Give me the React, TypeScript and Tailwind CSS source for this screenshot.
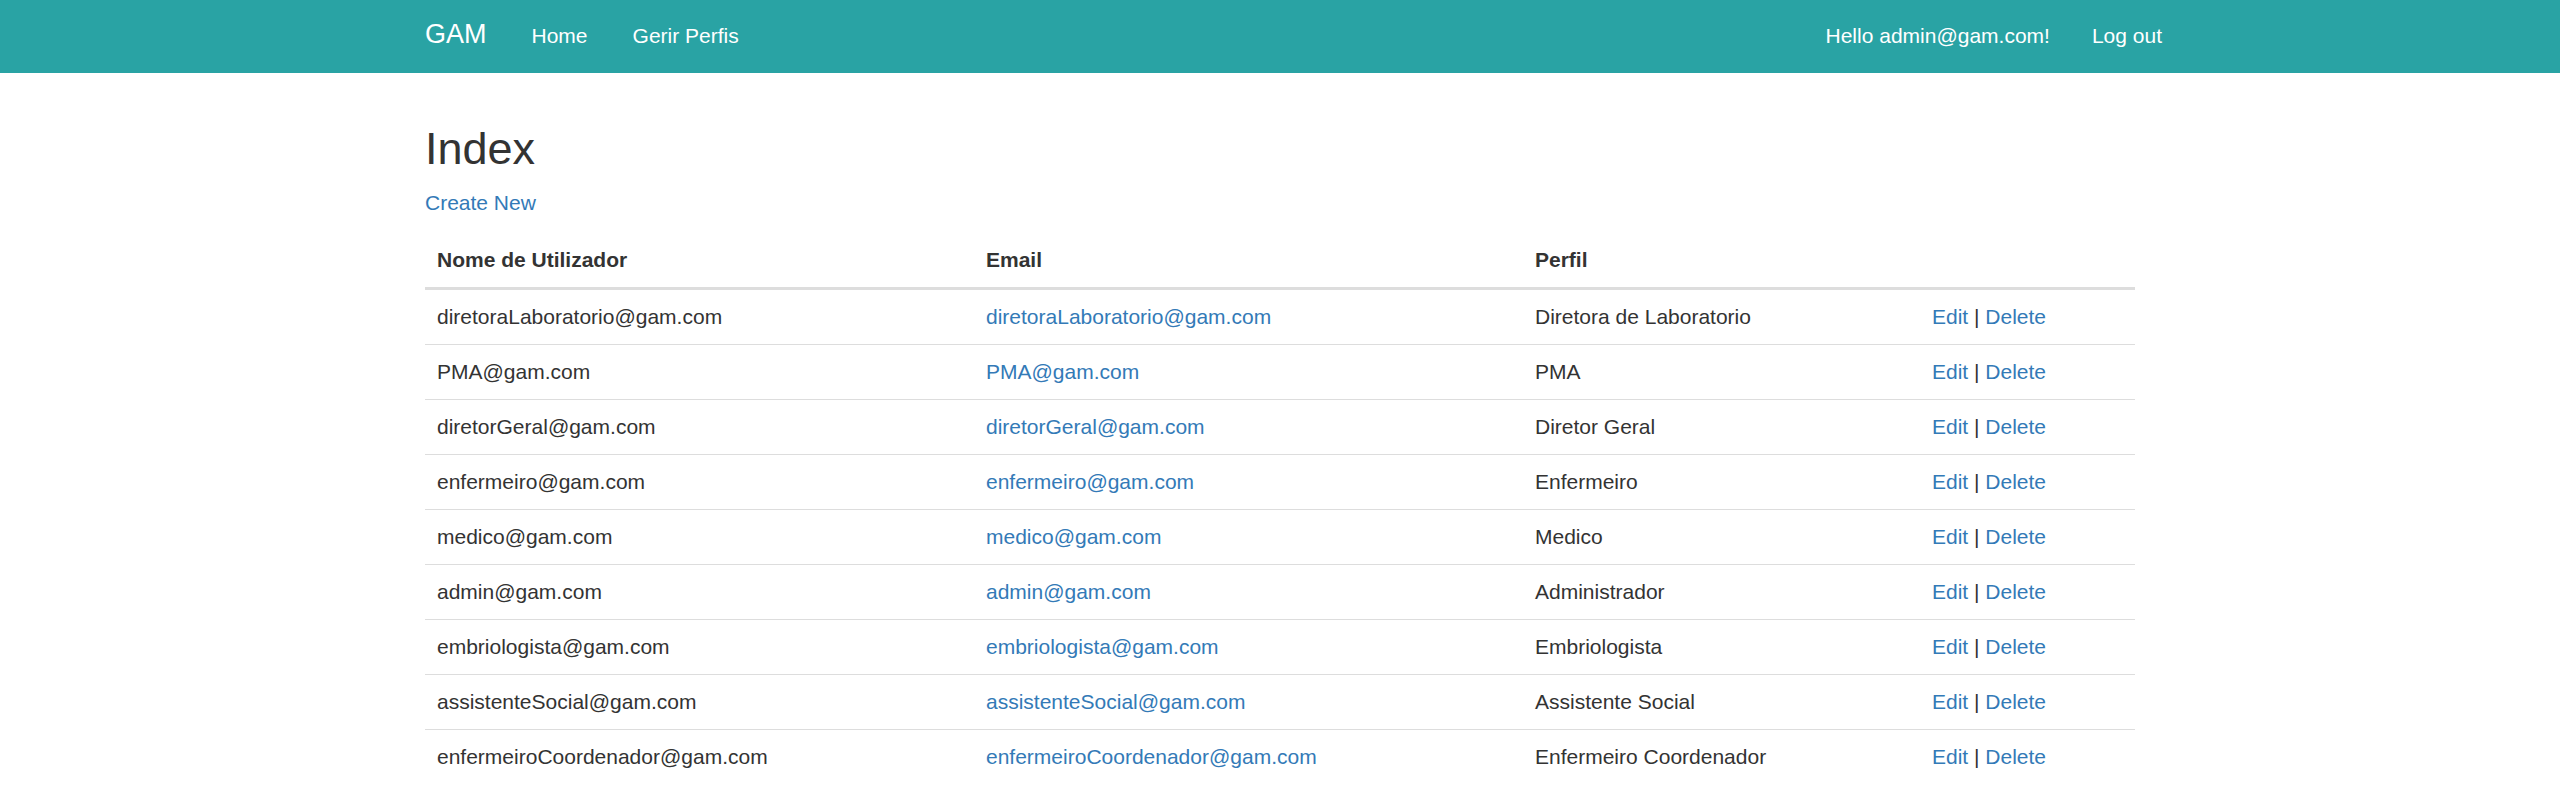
const USERS = [
  { user: 'diretoraLaboratorio@gam.com', perfil: 'Diretora de Laboratorio' },
  { user: 'PMA@gam.com', perfil: 'PMA' },
  { user: 'diretorGeral@gam.com', perfil: 'Diretor Geral' },
  { user: 'enfermeiro@gam.com', perfil: 'Enfermeiro' },
  { user: 'medico@gam.com', perfil: 'Medico' },
  { user: 'admin@gam.com', perfil: 'Administrador' },
  { user: 'embriologista@gam.com', perfil: 'Embriologista' },
  { user: 'assistenteSocial@gam.com', perfil: 'Assistente Social' },
  { user: 'enfermeiroCoordenador@gam.com', perfil: 'Enfermeiro Coordenador' },
];

function Navbar() {
  return (
    <nav className="h-[73px] bg-[#29a3a4] text-white">
      <div className="mx-auto flex h-full w-[1710px] items-center justify-between">
        <div className="flex h-full items-center">
          <a href="#" className="pb-[6px] text-[27px] leading-[30px]">GAM</a>
          <a href="#" className="ml-[45px] pb-[3px] text-[21px] leading-[29px]">Home</a>
          <a href="#" className="ml-[45px] pb-[3px] text-[21px] leading-[29px]">Gerir Perfis</a>
        </div>
        <div className="mr-[-27px] flex h-full items-center gap-[42px] pb-[3px] text-[21px] leading-[29px]">
          <a href="#">Hello admin@gam.com!</a>
          <a href="#">Log out</a>
        </div>
      </div>
    </nav>
  );
}

export default function App() {
  return (
    <div className="min-h-screen bg-white font-['Liberation_Sans',Arial,sans-serif] text-[21px] text-[#333]">
      <Navbar />
      <main className="mx-auto w-[1710px]">
        <h2 className="mt-[52px] text-[45px] leading-[48px]">Index</h2>
        <p className="mt-[15px] leading-[30px]">
          <a href="#" className="text-[#337ab7]">Create New</a>
        </p>
        <table className="mt-[15px] w-full table-fixed border-collapse">
          <colgroup>
            <col className="w-[549px]" />
            <col className="w-[549px]" />
            <col className="w-[397px]" />
            <col className="w-[215px]" />
          </colgroup>
          <thead>
            <tr className="border-b-[3px] border-[#ddd]">
              <th className="px-[12px] py-[12px] text-left font-bold leading-[30px]">Nome de Utilizador</th>
              <th className="px-[12px] py-[12px] text-left font-bold leading-[30px]">Email</th>
              <th className="px-[12px] py-[12px] text-left font-bold leading-[30px]">Perfil</th>
              <th className="px-[12px] py-[12px]"></th>
            </tr>
          </thead>
          <tbody>
            {USERS.map((u, i) => (
              <tr key={u.user} className={i === 0 ? '' : 'border-t border-[#ddd]'}>
                <td className="px-[12px] py-[12px] leading-[30px]">{u.user}</td>
                <td className="px-[12px] py-[12px] leading-[30px]">
                  <a href="#" className="text-[#337ab7]">{u.user}</a>
                </td>
                <td className="px-[12px] py-[12px] leading-[30px]">{u.perfil}</td>
                <td className="px-[12px] py-[12px] leading-[30px]">
                  <a href="#" className="text-[#337ab7]">Edit</a> |{' '}
                  <a href="#" className="text-[#337ab7]">Delete</a>
                </td>
              </tr>
            ))}
          </tbody>
        </table>
      </main>
    </div>
  );
}
